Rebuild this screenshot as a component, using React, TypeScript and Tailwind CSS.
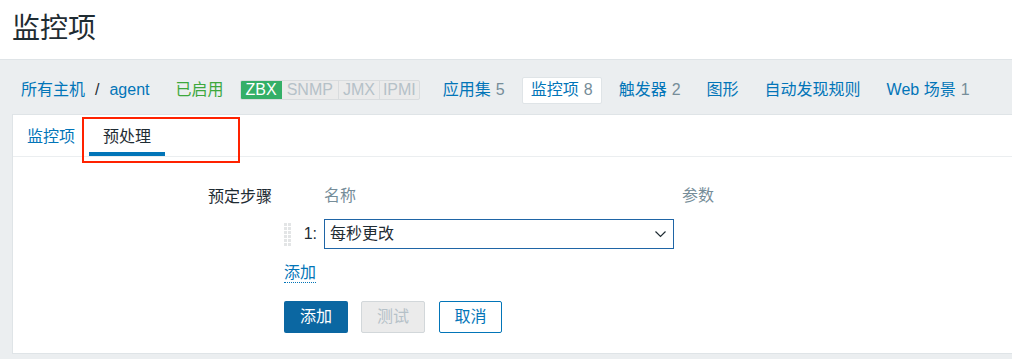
import * as React from "react"

const font = { fontFamily: '"Liberation Sans", "Noto Sans CJK SC", sans-serif' }

function DragHandle() {
  const dots = []
  for (let r = 0; r < 6; r++) {
    for (let c = 0; c < 2; c++) {
      dots.push(<rect key={`${r}-${c}`} x={c * 4} y={r * 4} width="3" height="3" fill="#e3e5e6" />)
    }
  }
  return (
    <svg width="7" height="23" viewBox="0 0 7 23" className="block">
      {dots}
    </svg>
  )
}

function NavItem({ label, count, active }: { label: string; count?: number; active?: boolean }) {
  return (
    <div
      className={`flex h-[27px] items-center rounded-[2px] px-[8px] ${
        active ? "border border-[#dfe4e7] bg-white" : "border border-transparent"
      }`}
    >
      <span className="text-[#0275b8]">{label}</span>
      {count !== undefined && <span className="ml-[5px] text-[#768d99]">{count}</span>}
    </div>
  )
}

export default function App() {
  return (
    <div className="relative h-[359px] w-[1012px] overflow-hidden bg-[#ebeef0] text-[16px] text-[#1f2c33]" style={font}>
      {/* Header */}
      <div className="h-[60px] border-b border-[#dfe4e7] bg-white pl-[12px]">
        <h1 className="pt-[11px] text-[28px] leading-[36px] font-normal text-[#1f2c33]">监控项</h1>
      </div>

      {/* Breadcrumb / host nav */}
      <div className="flex h-[54px] items-center pl-[21px] pt-[6px]">
        <span className="text-[#0275b8]">所有主机</span>
        <span className="mx-[10px] text-[#1f2c33]">/</span>
        <span className="text-[#0275b8]">agent</span>
        <span className="ml-[26px] text-[#3da83d]">已启用</span>
        <div className="ml-[16px] flex h-[20px] items-stretch overflow-hidden rounded-[2px] border border-[#d9dcde] bg-[#ebebeb] text-[16px] leading-[18px]">
          <span className="bg-[#34af67] px-[5px] text-white">ZBX</span>
          <span className="border-r border-[#d9dcde] px-[5px] text-[#b5c1c8]">SNMP</span>
          <span className="border-r border-[#d9dcde] px-[4px] text-[#b5c1c8]">JMX</span>
          <span className="px-[3px] text-[#b5c1c8]">IPMI</span>
        </div>
        <div className="ml-[14px] flex items-center gap-[8px]">
          <NavItem label="应用集" count={5} />
          <NavItem label="监控项" count={8} active />
          <NavItem label="触发器" count={2} />
          <NavItem label="图形" />
          <NavItem label="自动发现规则" />
          <NavItem label="Web 场景" count={1} />
        </div>
      </div>

      {/* Panel */}
      <div className="ml-[12px] h-[240px] border-y border-l border-[#dfe4e7] bg-white">
        {/* Tabs */}
        <div className="flex h-[42px] border-b border-[#ebeef0]">
          <div className="flex items-center px-[14px] pt-[2px] text-[#0275b8]">监控项</div>
          <div className="flex flex-col px-[14px]">
            <div className="flex flex-1 items-center pt-[7px] text-[#1f2c33]">预处理</div>
            <div className="-mx-[14px] h-[4px] bg-[#0275b8]" />
          </div>
        </div>

        {/* Form */}
        <div className="pt-[27px]">
          <div className="flex">
            <div className="w-[259px] pt-[1px] text-right leading-[24px] text-[#1f2c33]">预定步骤</div>
            <div className="ml-[12px] flex flex-col">
              <div className="flex h-[24px] items-center text-[#768d99]">
                <span className="ml-[40px] w-[358px]">名称</span>
                <span>参数</span>
              </div>
              <div className="mt-[11px] flex h-[30px] items-center">
                <DragHandle />
                <span className="w-[26px] text-right text-[#1f2c33]">1:</span>
                <div className="ml-[7px] flex h-[30px] w-[350px] items-center justify-between border border-[#1f65a6] bg-white pl-[5px] pr-[7px]">
                  <span>每秒更改</span>
                  <svg width="11" height="7" viewBox="0 0 11 7" fill="none">
                    <polyline points="0.5,0.5 5.5,5.5 10.5,0.5" stroke="#1f2c33" strokeWidth="1.2" />
                  </svg>
                </div>
              </div>
              <div className="mt-[14px] flex h-[20px] items-center">
                <span className="border-b border-dotted border-[#0275b8] leading-[18px] text-[#0275b8]">添加</span>
              </div>
              <div className="mt-[18px] flex items-center">
                <button className="h-[32px] w-[64px] rounded-[2px] bg-[#0b67a2] text-white">添加</button>
                <button className="ml-[13px] h-[32px] w-[64px] rounded-[2px] border border-[#d2d7da] bg-[#ebebeb] text-[#b5c1c8]">
                  测试
                </button>
                <button className="ml-[14px] h-[32px] w-[63px] rounded-[2px] border border-[#0275b8] bg-white text-[#0275b8]">
                  取消
                </button>
              </div>
            </div>
          </div>
        </div>
      </div>

      {/* Annotation box */}
      <div className="absolute left-[82px] top-[117px] h-[46px] w-[158px] border-2 border-[#ff2200]" />
    </div>
  )
}
